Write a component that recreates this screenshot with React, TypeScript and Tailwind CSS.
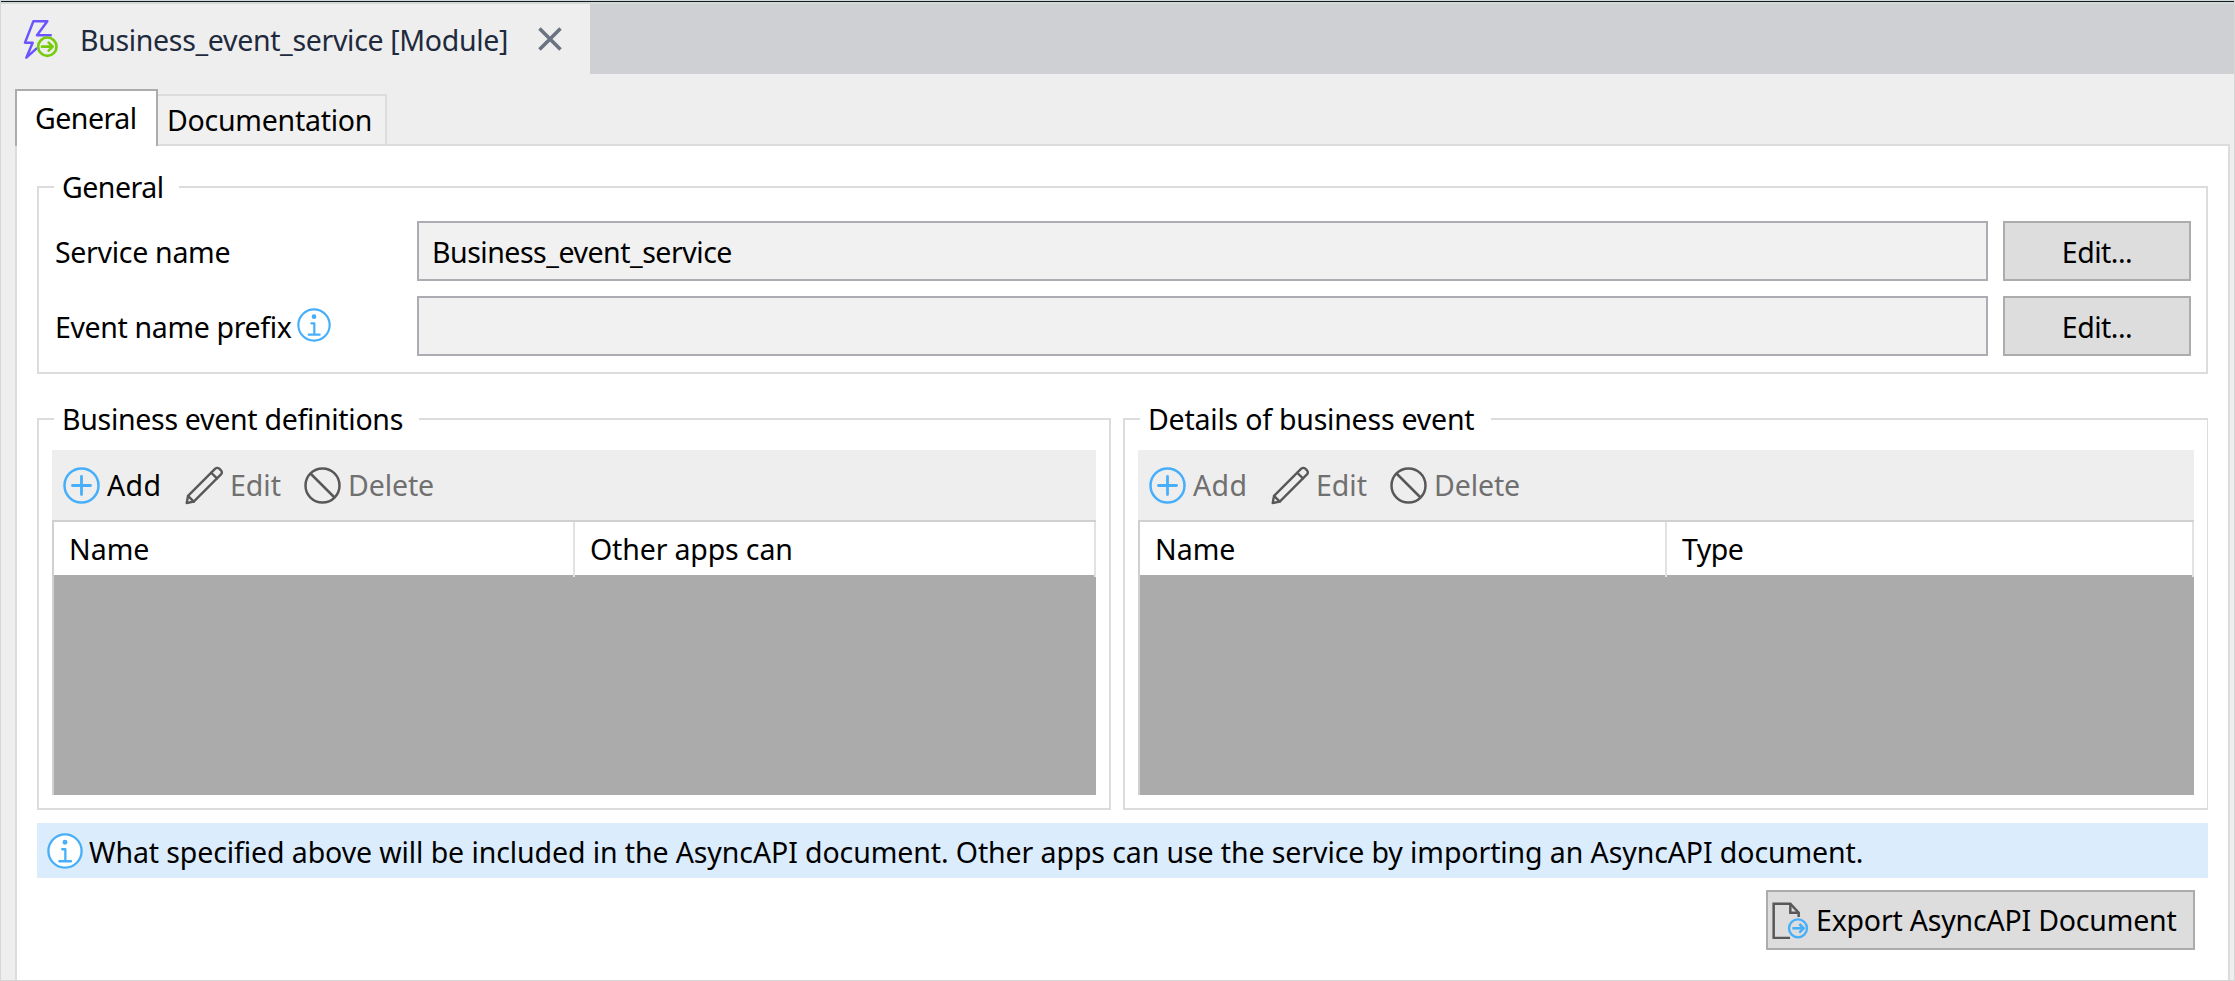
import React from "react";

function ModuleIcon() {
  return (
    <svg viewBox="60 50 120 135" className="h-[45px] w-[40px]" fill="none" strokeLinejoin="round" strokeLinecap="round">
      <path d="M152 105H111L142 63H100L75 127H98L79 172L109 145" stroke="#6a55ff" strokeWidth="7.5" />
      <circle cx="142" cy="139" r="27.5" stroke="#76cc0c" strokeWidth="8" />
      <path d="M126 139H158M146 127L158 139L146 151" stroke="#76cc0c" strokeWidth="8" />
    </svg>
  );
}

function CloseIcon() {
  return (
    <svg viewBox="0 0 24 24" className="h-[24px] w-[24px]" fill="none" stroke="#6b7280" strokeWidth="3.6">
      <path d="M1.5 1.5L22.5 22.5M22.5 1.5L1.5 22.5" />
    </svg>
  );
}

function InfoIcon({ className, fill = "none" }: { className: string; fill?: string }) {
  return (
    <svg viewBox="36 24 102 102" className={className} fill="none" stroke="#47affa" strokeWidth="6.5" strokeLinecap="round" strokeLinejoin="round">
      <circle cx="87" cy="75" r="47" fill={fill} />
      <circle cx="87" cy="50" r="7" fill="#47affa" stroke="none" />
      <path d="M79 70H88V104M71 104H104" />
    </svg>
  );
}

function AddIcon() {
  return (
    <svg viewBox="0 0 37 37" className="size-[37px]" fill="none" stroke="#47affa" strokeWidth="2.5" strokeLinecap="round">
      <circle cx="18.5" cy="18.5" r="17" />
      <path d="M18.5 9.5V27.5M9.5 18.5H27.5" strokeWidth="2.8" />
    </svg>
  );
}

function PencilIcon() {
  return (
    <svg viewBox="28 28 116 116" className="size-[39px]" fill="none" stroke="#585858" strokeWidth="7" strokeLinejoin="round" strokeLinecap="round">
      <path d="M33 138L37 117L118 36Q124 31 130 36L135 41Q140 47 135 53L54 134Z" />
      <path d="M106 48L123 65M37 117L54 134" />
    </svg>
  );
}

function DeleteIcon() {
  return (
    <svg viewBox="0 0 37 37" className="size-[37px]" fill="none" stroke="#585858" strokeWidth="2.5">
      <circle cx="18.5" cy="18.5" r="17" />
      <path d="M6.5 6.5L30.5 30.5" />
    </svg>
  );
}

function ExportIcon() {
  return (
    <svg viewBox="36 47 111 111" className="size-[37px]" fill="none" strokeWidth="7.5">
      <path d="M90 155H41V52H91L116 79V92" stroke="#585858" />
      <path d="M91 52V79H116" stroke="#585858" />
      <circle cx="114" cy="126" r="27" stroke="#47affa" strokeWidth="7" />
      <path d="M97 126H130M118 113L131 126L118 139" stroke="#47affa" />
    </svg>
  );
}

function PropertyRow({ label, value, info }: { label: React.ReactNode; value: string; info?: boolean }) {
  return (
    <div className="flex h-[60px] items-center">
      <div className="flex w-[363px] items-center">
        {label}
        {info && <InfoIcon className="mb-[3px] ml-[5px] size-[34px]" />}
      </div>
      <div className="flex h-full w-[1571px] items-center border-2 border-[#abadb3] bg-[#f1f1f1] pt-[2px] pl-[13px] tracking-[-0.48px]">
        {value}
      </div>
      <button className="ml-[15px] h-full w-[188px] border-2 border-[#acacac] bg-[#dddddd] pt-[2px] tracking-[-0.5px]">Edit...</button>
    </div>
  );
}

function Toolbar({ addEnabled }: { addEnabled?: boolean }) {
  return (
    <div className="flex h-[70px] items-center bg-[#eeeeee] pl-[11px] text-[#707070]">
      <div className="flex w-[122px] items-center gap-[7px]">
        <AddIcon />
        <span className={addEnabled ? "tracking-[0.4px] text-black" : "tracking-[0.4px]"}>Add</span>
      </div>
      <div className="flex w-[119px] items-center gap-[6px]">
        <PencilIcon />
        <span>Edit</span>
      </div>
      <div className="flex items-center gap-[7px]">
        <DeleteIcon />
        <span className="tracking-[-0.1px]">Delete</span>
      </div>
    </div>
  );
}

export default function App() {
  return (
    <div className="flex h-[981px] w-[2235px] flex-col overflow-hidden border-x border-b border-[#d6d6d6] bg-[#eeeeee] font-['Noto_Sans','Open_Sans',sans-serif] text-[28.5px] leading-[38px] whitespace-nowrap text-black">
      <div className="h-px shrink-0 bg-[#d3d9d4]" />
      <div className="h-px shrink-0 bg-[#10182a]" />
      <div className="h-[2px] shrink-0 bg-[#d3d9d4]" />

      <div className="flex h-[70px] shrink-0 bg-[#cfd0d4]">
        <div className="flex w-[589px] items-start bg-[#eeeeee] pl-[19px]">
          <div className="mt-[13px]">
            <ModuleIcon />
          </div>
          <span className="mt-[17px] ml-[20px] w-[427px] tracking-[-0.33px] text-[#1f2a3d]">Business_event_service [Module]</span>
          <button className="mt-[23px] ml-[31px]" aria-label="Close">
            <CloseIcon />
          </button>
        </div>
      </div>

      <div className="z-10 flex h-[70px] shrink-0 items-end pl-[14px]">
        <div className="mb-[-2px] h-[57px] w-[143px] border-2 border-b-0 border-[#acacac] bg-white pt-[8px] pl-[18px] tracking-[-0.48px]">
          General
        </div>
        <div className="h-[50px] w-[229px] border-t-2 border-r-2 border-[#dcdcdc] bg-[#f0f0f0] pt-[5px] pl-[9px] tracking-[-0.25px]">
          Documentation
        </div>
      </div>

      <main className="mr-[4px] ml-[14px] flex grow flex-col border-2 border-b-0 border-[#dcdcdc] bg-white pt-[22px] pl-[20px]">
        <fieldset className="h-[206px] w-[2171px] min-w-0 shrink-0 border-2 border-[#dcdcdc] pl-[15px]">
          <legend className="w-[125px] pl-[8px] tracking-[-0.48px]">General</legend>
          <div className="flex flex-col gap-[15px] pt-[15px]">
            <PropertyRow label={<span className="pt-[2px] pl-[1px] tracking-[-0.3px]">Service name</span>} value="Business_event_service" />
            <PropertyRow label={<span className="pt-[2px] pl-[1px] tracking-[-0.35px]">Event name prefix</span>} value="" info />
          </div>
        </fieldset>

        <div className="mt-[26px] flex h-[410px] shrink-0 gap-[12px]">
          <fieldset className="h-[410px] w-[1074px] min-w-0 border-2 border-[#dcdcdc]">
            <legend className="ml-[15px] w-[365px] pl-[8px] tracking-[-0.3px]">Business event definitions</legend>
            <div className="mx-[13px] flex flex-col pt-[12px]">
              <Toolbar addEnabled />
              <div className="flex h-[275px] flex-col border-t-2 border-l-2 border-[#d0d0d0] bg-[#ababab]">
                <div className="flex h-[53px] items-center bg-white">
                  <div className="w-[519px] pt-px pl-[15px]">Name</div>
                  <div className="mb-[-2px] h-[55px] w-[2px] bg-[#e2e2e2]" />
                  <div className="grow pt-px pl-[15px] tracking-[-0.15px]">Other apps can</div>
                  <div className="mb-[-2px] h-[55px] w-[2px] bg-[#e2e2e2]" />
                </div>
              </div>
            </div>
          </fieldset>

          <fieldset className="h-[410px] w-[1085px] min-w-0 border-2 border-r border-[#dcdcdc]">
            <legend className="ml-[15px] w-[351px] pl-[8px] tracking-[-0.22px]">Details of business event</legend>
            <div className="mx-[13px] flex flex-col pt-[12px]">
              <Toolbar />
              <div className="flex h-[275px] flex-col border-t-2 border-l-2 border-[#d0d0d0] bg-[#ababab]">
                <div className="flex h-[53px] items-center bg-white">
                  <div className="w-[525px] pt-px pl-[15px]">Name</div>
                  <div className="mb-[-2px] h-[55px] w-[2px] bg-[#e2e2e2]" />
                  <div className="grow pt-px pl-[15px] tracking-[-0.5px]">Type</div>
                  <div className="mb-[-2px] h-[55px] w-[2px] bg-[#e2e2e2]" />
                </div>
              </div>
            </div>
          </fieldset>
        </div>

        <div className="mt-[13px] flex h-[55px] w-[2171px] shrink-0 items-center bg-[#dbecfd] pl-[10px]">
          <InfoIcon className="size-[36px]" fill="#ffffff" />
          <span className="mt-[2px] ml-[6px] tracking-[-0.1px]">
            What specified above will be included in the AsyncAPI document. Other apps can use the service by importing an AsyncAPI document.
          </span>
        </div>

        <button className="mt-[12px] ml-[1729px] flex h-[60px] w-[429px] shrink-0 items-center border-2 border-[#acacac] bg-[#dddddd] pl-[4px]">
          <ExportIcon />
          <span className="ml-[7px] tracking-[-0.2px]">Export AsyncAPI Document</span>
        </button>
      </main>
    </div>
  );
}
